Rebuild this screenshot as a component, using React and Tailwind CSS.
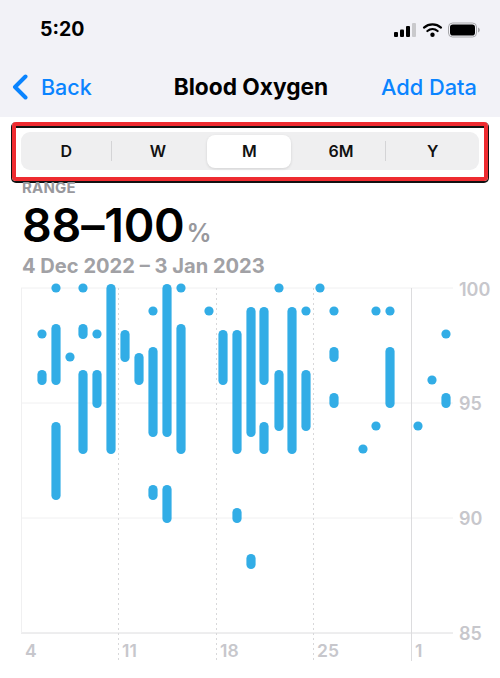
import React from 'react';

// page pixel offsets of the chart box
const CHART_LEFT = 0;
const CHART_TOP = 280;

const dots = [
  [42, 334], [56, 288], [70, 357], [83, 288], [97, 334], [153, 311], [181, 288], [209, 311],
  [279, 288], [306, 311], [320, 288], [334, 311], [363, 449], [376, 311], [376, 426], [390, 311],
  [418, 426], [432, 380], [446, 334],
];

const bars = [
  [42, 370, 385], [56, 324, 385], [56, 422, 500], [83, 324, 339], [83, 370, 454], [97, 370, 408],
  [111, 284, 454], [125, 330, 362], [139, 353, 385], [153, 347, 437], [153, 485, 500],
  [167, 284, 437], [167, 485, 523], [181, 324, 454], [223, 330, 385], [237, 330, 454],
  [237, 508, 523], [251, 307, 437], [251, 554, 569], [264, 307, 385], [264, 422, 454],
  [279, 370, 431], [292, 307, 454], [306, 370, 431], [334, 347, 362], [334, 393, 408],
  [390, 347, 408], [446, 393, 408],
];

const yLabels = [
  { text: '100', cls: 'top-[0px]' },
  { text: '95', cls: 'top-[114px]' },
  { text: '90', cls: 'top-[229px]' },
  { text: '85', cls: 'top-[344px]' },
];

const xLabels = [
  { text: '4', cls: 'left-[25px]' },
  { text: '11', cls: 'left-[122px]' },
  { text: '18', cls: 'left-[220px]' },
  { text: '25', cls: 'left-[317px]' },
  { text: '1', cls: 'left-[415px]' },
];

const ranges = ['D', 'W', 'M', '6M', 'Y'];

function StatusIcons() {
  return (
    <svg width="86" height="16" viewBox="0 0 86 16" className="block">
      <rect x="0" y="10" width="4" height="5" rx="1" fill="#000" />
      <rect x="6" y="7.5" width="4" height="7.5" rx="1" fill="#000" />
      <rect x="12" y="4" width="4" height="11" rx="1" fill="#000" />
      <rect x="18" y="1" width="4" height="14" rx="1" fill="#c9c9cc" />
      <path d="M30 5.6a13 13 0 0 1 17 0" fill="none" stroke="#000" strokeWidth="2.2" strokeLinecap="round" />
      <path d="M33.4 9a8 8 0 0 1 10.2 0" fill="none" stroke="#000" strokeWidth="2.2" strokeLinecap="round" />
      <circle cx="38.5" cy="12.8" r="2.2" fill="#000" />
      <rect x="54.5" y="1" width="28" height="14" rx="4" fill="none" stroke="#a8a8ab" strokeWidth="1" />
      <rect x="56" y="2.5" width="25" height="11" rx="2.8" fill="#000" />
      <path d="M84 5.5c1.2.4 1.8 1.3 1.8 2.5s-.6 2.1-1.8 2.5z" fill="#a8a8ab" />
    </svg>
  );
}

function Chart() {
  return (
    <div className="relative h-[385px] w-[500px]">
      <svg width="500" height="385" viewBox={`${CHART_LEFT} ${CHART_TOP} 500 385`} className="absolute inset-0">
        <line x1="21" y1="288" x2="453" y2="288" stroke="#f0f0f1" />
        <line x1="21" y1="403" x2="453" y2="403" stroke="#f0f0f1" />
        <line x1="21" y1="518" x2="453" y2="518" stroke="#f0f0f1" />
        <line x1="21" y1="633" x2="453" y2="633" stroke="#dcdcde" />
        <line x1="21.5" y1="288" x2="21.5" y2="633" stroke="#f0f0f1" />
        <line x1="118.5" y1="288" x2="118.5" y2="662" stroke="#d8d8da" strokeDasharray="2 3" />
        <line x1="216.5" y1="288" x2="216.5" y2="662" stroke="#d8d8da" strokeDasharray="2 3" />
        <line x1="313.5" y1="288" x2="313.5" y2="662" stroke="#d8d8da" strokeDasharray="2 3" />
        <line x1="411.5" y1="288" x2="411.5" y2="661" stroke="#dcdcde" />
        {bars.map(([x, top, bottom], i) => (
          <rect key={i} x={x - 4.6} y={top} width="9.2" height={bottom - top} rx="4.6" fill="#32ade6" />
        ))}
        {dots.map(([x, y], i) => (
          <circle key={i} cx={x} cy={y} r="4.6" fill="#32ade6" />
        ))}
      </svg>
      {yLabels.map((l) => (
        <span key={l.text} className={`absolute left-[459px] text-[18px] leading-[20px] font-semibold text-[#c7c7cc] ${l.cls}`}>
          {l.text}
        </span>
      ))}
      {xLabels.map((l) => (
        <span key={l.text} className={`absolute top-[361px] text-[17.5px] leading-[20px] font-semibold text-[#c7c7cc] ${l.cls}`}>
          {l.text}
        </span>
      ))}
    </div>
  );
}

export default function App() {
  return (
    <div className="flex h-[678px] w-[500px] flex-col overflow-hidden bg-white font-['Inter','Liberation_Sans',sans-serif]">
      <div className="h-[117px] bg-[#f2f2f7]">
        <div className="flex h-[60px] items-center justify-between pl-10 pr-[20px]">
          <span className="text-[19.5px] leading-none font-bold text-black">5:20</span>
          <StatusIcons />
        </div>
        <div className="flex h-[57px] items-start justify-between pl-3 pr-[23px] pt-[12px]">
          <div className="flex w-[109px] items-center gap-[13px] text-[#0a84ff]">
            <svg width="16" height="26" viewBox="0 0 16 26" fill="none">
              <path d="M13.5 2.5 3 13l10.5 10.5" stroke="#0a84ff" strokeWidth="4" strokeLinecap="round" strokeLinejoin="round" />
            </svg>
            <span className="text-[21.5px] leading-[30px] font-medium">Back</span>
          </div>
          <span className="text-[22.7px] leading-[30px] font-bold text-black">Blood Oxygen</span>
          <span className="text-[21.8px] leading-[30px] font-medium text-[#0a84ff]">Add Data</span>
        </div>
      </div>

      <div className="mx-3 mt-[5px] h-[59px] rounded-[4px] border-[4px] border-[#ee2b30] shadow-[0_1px_0_1px_#111,inset_0_2px_0_#111]">
        <div className="mx-[5px] mt-[6px] flex h-[38px] items-center rounded-[9px] bg-[#efeff0]">
          {ranges.map((r, i) => (
            <div key={r} className="relative flex h-[33px] flex-1 items-center justify-center">
              {r === 'M' ? <div className="absolute inset-y-0 left-[3px] right-[5px] rounded-[8px] bg-white shadow-[0_1px_3px_rgba(0,0,0,0.12)]" /> : null}
              <span className="relative -ml-[1px] text-[16px] font-semibold text-[#111]">{r}</span>
              {i === 0 || i === 3 ? <div className="absolute right-[1px] h-[20px] w-px bg-[#d4d4d6]" /> : null}
            </div>
          ))}
        </div>
      </div>

      <div className="h-[99px] pl-[22px]">
        <div className="-mt-[1px] text-[15px] leading-[15px] font-bold tracking-[0.2px] text-[#98989d]">RANGE</div>
        <div className="mt-[4px] flex h-[52px] items-baseline">
          <span className="text-[46.5px] leading-[52px] font-semibold tracking-[-0.2px] text-black">88–100</span>
          <span className="ml-[2px] text-[25px] font-semibold text-[#98989d]">%</span>
        </div>
        <div className="mt-[3px] text-[20.1px] leading-[24px] font-bold text-[#a1a1a5]">4 Dec 2022 – 3 Jan 2023</div>
      </div>

      <Chart />
    </div>
  );
}
